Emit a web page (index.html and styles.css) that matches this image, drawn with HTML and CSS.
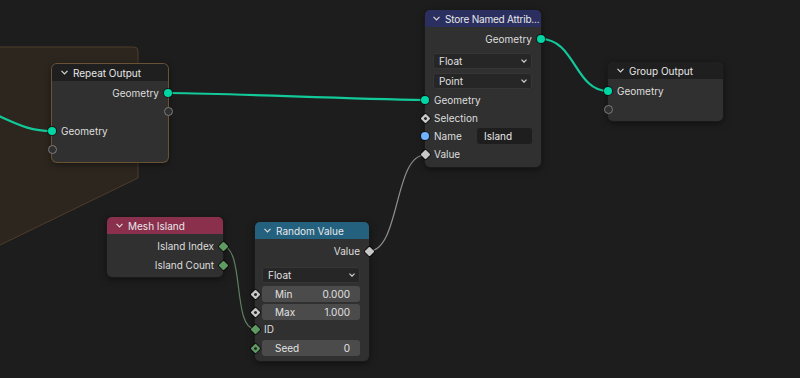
FILE: index.html
```html
<!DOCTYPE html>
<html lang="en">
<head>
    <meta charset="UTF-8">
    <title>Node Editor</title>
    <link rel="stylesheet" href="styles.css">
</head>
<body>
    <div class="editor">
        <svg class="wires" width="800" height="378" viewBox="0 0 800 378">
            <path class="zone" d="M -2 47 L 134 47 Q 138 47 138 51 L 138 178 L -2 246 Z"/>
            <path class="wire geo" d="M -20 108 C 15 122, 25 131, 52 131"/>
            <path class="wire geo" d="M 168 93 C 250 94, 340 99, 425 100"/>
            <path class="wire geo" d="M 541 39 C 575 39, 575 91, 608 91"/>
            <path class="wire float" d="M 369 251 C 400 251, 394 155, 425 155"/>
            <path class="wire int" d="M 222 246 C 245 246, 232 329, 255 329"/>
        </svg>

        <!-- Repeat Output -->
        <div class="node node-repeat">
            <div class="node-header header-plain">
                <svg class="chev" width="7" height="5" viewBox="0 0 7 5"><polyline points="0.5,0.8 3.5,3.8 6.5,0.8"/></svg>
                Repeat Output
            </div>
            <div class="node-body">
                <div class="row out">Geometry<span class="socket geo-s right"></span></div>
                <div class="row out"><span class="socket empty right"></span></div>
                <div class="row in gap-top">Geometry<span class="socket geo-s left"></span></div>
                <div class="row in"><span class="socket empty left"></span></div>
            </div>
        </div>

        <!-- Store Named Attribute -->
        <div class="node node-store">
            <div class="node-header header-attr">
                <svg class="chev" width="7" height="5" viewBox="0 0 7 5"><polyline points="0.5,0.8 3.5,3.8 6.5,0.8"/></svg>
                <span class="title-tight">Store Named Attrib...</span>
            </div>
            <div class="node-body">
                <div class="row out">Geometry<span class="socket geo-s right"></span></div>
                <div class="dropdown first">Float<svg class="chev small" width="6" height="4" viewBox="0 0 6 4"><polyline points="0.5,0.6 3,3.2 5.5,0.6"/></svg></div>
                <div class="dropdown">Point<svg class="chev small" width="6" height="4" viewBox="0 0 6 4"><polyline points="0.5,0.6 3,3.2 5.5,0.6"/></svg></div>
                <div class="row in gap-small">Geometry<span class="socket geo-s left"></span></div>
                <div class="row in">Selection<span class="socket diamond light dot left"></span></div>
                <div class="row in">Name<span class="text-field">Island</span><span class="socket string left"></span></div>
                <div class="row in">Value<span class="socket diamond light left"></span></div>
            </div>
        </div>

        <!-- Group Output -->
        <div class="node node-group">
            <div class="node-header header-plain">
                <svg class="chev" width="7" height="5" viewBox="0 0 7 5"><polyline points="0.5,0.8 3.5,3.8 6.5,0.8"/></svg>
                Group Output
            </div>
            <div class="node-body">
                <div class="row in">Geometry<span class="socket geo-s left"></span></div>
                <div class="row in"><span class="socket empty left"></span></div>
            </div>
        </div>

        <!-- Mesh Island -->
        <div class="node node-island">
            <div class="node-header header-input">
                <svg class="chev" width="7" height="5" viewBox="0 0 7 5"><polyline points="0.5,0.8 3.5,3.8 6.5,0.8"/></svg>
                Mesh Island
            </div>
            <div class="node-body">
                <div class="row out">Island Index<span class="socket diamond green right"></span></div>
                <div class="row out">Island Count<span class="socket diamond green right"></span></div>
            </div>
        </div>

        <!-- Random Value -->
        <div class="node node-random">
            <div class="node-header header-util">
                <svg class="chev" width="7" height="5" viewBox="0 0 7 5"><polyline points="0.5,0.8 3.5,3.8 6.5,0.8"/></svg>
                Random Value
            </div>
            <div class="node-body">
                <div class="row out">Value<span class="socket diamond light right"></span></div>
                <div class="dropdown mid">Float<svg class="chev small" width="6" height="4" viewBox="0 0 6 4"><polyline points="0.5,0.6 3,3.2 5.5,0.6"/></svg></div>
                <div class="field-row first-field">
                    <div class="num-field"><span>Min</span><span>0.000</span></div>
                    <span class="socket diamond light dot left"></span>
                </div>
                <div class="field-row">
                    <div class="num-field"><span>Max</span><span>1.000</span></div>
                    <span class="socket diamond light dot left"></span>
                </div>
                <div class="row in">ID<span class="socket diamond green left"></span></div>
                <div class="field-row">
                    <div class="num-field"><span>Seed</span><span>0</span></div>
                    <span class="socket diamond green dot left"></span>
                </div>
            </div>
        </div>
    </div>
</body>
</html>
```

FILE: styles.css
```css
body {
    margin: 0;
    background-color: #1d1d1d;
    font-family: Inter, "DejaVu Sans", sans-serif;
}
.editor {
    position: relative;
    width: 800px;
    height: 378px;
    overflow: hidden;
    background-color: #1d1d1d;
}
.wires {
    position: absolute;
    left: 0;
    top: 0;
}
.zone {
    fill: #2c261f;
    stroke: #4e3d29;
    stroke-width: 1;
}
.wire {
    fill: none;
}
.wire.geo {
    stroke: #12c999;
    stroke-width: 2.2;
}
.wire.float {
    stroke: #8e8e8e;
    stroke-width: 1.2;
}
.wire.int {
    stroke: #5f7f5f;
    stroke-width: 1.2;
}

/* nodes */
.node {
    position: absolute;
    width: 116px;
    background-color: #303030;
    border-radius: 5px;
    box-shadow: 0 0 0 1px #1a1a1a, 0 2px 7px rgba(0, 0, 0, 0.55);
    color: #dedede;
    font-size: 10px;
}
.node-repeat {
    left: 52px;
    top: 64px;
    box-shadow: 0 0 0 1px #6a5234, 0 2px 7px rgba(0, 0, 0, 0.55);
}
.node-store {
    left: 425px;
    top: 10px;
}
.node-group {
    left: 608px;
    top: 62px;
    width: 115px;
}
.node-island {
    left: 107px;
    top: 217px;
}
.node-random {
    left: 255px;
    top: 222px;
    width: 114px;
}
.node-header {
    height: 17px;
    display: flex;
    align-items: center;
    gap: 5px;
    padding-left: 9px;
    border-radius: 5px 5px 0 0;
    color: #e8e8e8;
    white-space: nowrap;
}
.title-tight {
    letter-spacing: -0.2px;
}
.header-plain {
    background-color: #1f1f1f;
}
.header-attr {
    background-color: #2a2f60;
    padding-left: 8px;
}
.header-input {
    background-color: #8a2f4c;
}
.header-util {
    background-color: #23617f;
}
.chev {
    fill: none;
    stroke: #d8d8d8;
    stroke-width: 1.2;
    flex-shrink: 0;
}
.chev.small {
    stroke: #cfcfcf;
}
.node-body {
    display: flex;
    flex-direction: column;
    padding: 3px 0 4px;
}
.node-group .node-body,
.node-island .node-body {
    padding-bottom: 3px;
}
.node-island .node-body .row + .row {
    margin-top: 1px;
}
.node-random .node-body {
    padding-bottom: 5px;
}
.row {
    position: relative;
    height: 18px;
    display: flex;
    align-items: center;
    padding: 0 9px;
}
.row.out {
    justify-content: flex-end;
}
.gap-top {
    margin-top: 2px;
}
.gap-small {
    margin-top: 2px;
}

/* sockets */
.socket {
    position: absolute;
    top: 50%;
    width: 8px;
    height: 8px;
    margin-top: -4px;
    border-radius: 50%;
    box-sizing: border-box;
}
.socket.left {
    left: -4px;
}
.socket.right {
    right: -4px;
}
.geo-s {
    background-color: #00d6a3;
    box-shadow: 0 0 0 1px rgba(0, 0, 0, 0.55);
}
.string {
    background-color: #70b2ff;
    box-shadow: 0 0 0 1px rgba(0, 0, 0, 0.55);
}
.empty {
    width: 9px;
    height: 9px;
    margin-top: -4.5px;
    border: 1px solid #7c7c7c;
    background-color: #303030;
}
.socket.left.empty {
    left: -4.5px;
}
.socket.right.empty {
    right: -4.5px;
}
.diamond {
    width: 7px;
    height: 7px;
    margin-top: -3.5px;
    border-radius: 1px;
    transform: rotate(45deg);
    box-shadow: 0 0 0 1px rgba(0, 0, 0, 0.55);
}
.socket.left.diamond {
    left: -3.5px;
}
.socket.right.diamond {
    right: -3.5px;
}
.diamond.light {
    background-color: #c8c8c8;
}
.diamond.green {
    background-color: #5e9a62;
}
.diamond.dot::after {
    content: "";
    position: absolute;
    left: 2px;
    top: 2px;
    width: 3px;
    height: 3px;
    border-radius: 50%;
    background-color: #2a2a2a;
}

/* widgets */
.dropdown {
    height: 16px;
    margin: 4px 9px 0 8px;
    padding: 0 5px 0 6px;
    display: flex;
    align-items: center;
    justify-content: space-between;
    background-color: #262626;
    border-radius: 3px;
    box-shadow: inset 0 0 0 1px #363636;
    color: #e0e0e0;
}
.dropdown.first {
    margin-top: 5px;
}
.dropdown.mid {
    margin: 7px 9px 0 7px;
}
.text-field {
    margin-left: auto;
    width: 55px;
    height: 16px;
    line-height: 16px;
    padding-left: 7px;
    box-sizing: border-box;
    background-color: #1e1e1e;
    border-radius: 3px;
    color: #e8e8e8;
}
.field-row {
    position: relative;
    height: 16px;
    margin-top: 2px;
    padding: 0 9px 0 7px;
}
.field-row.first-field {
    margin-top: 3px;
}
.num-field {
    height: 16px;
    display: flex;
    align-items: center;
    justify-content: space-between;
    padding: 0 10px 0 13px;
    background-color: #4b4b4b;
    border-radius: 3px;
    color: #e2e2e2;
}
```
